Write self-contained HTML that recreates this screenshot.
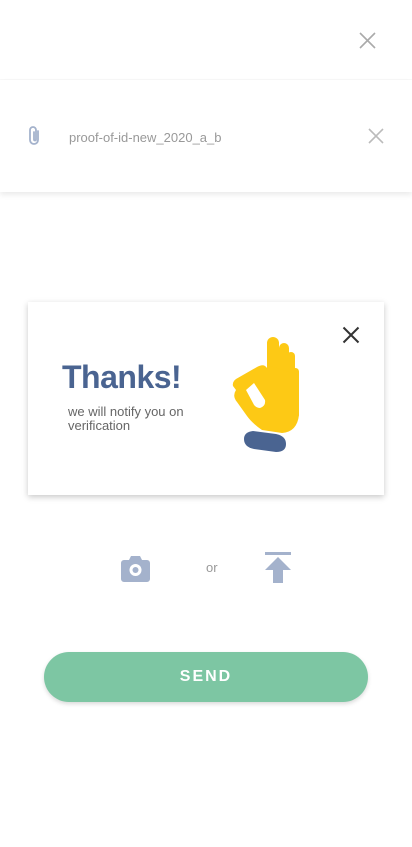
<!DOCTYPE html>
<html><head><meta charset="utf-8"><style>
*{margin:0;padding:0;box-sizing:border-box}
body{width:412px;height:847px;background:#fff;font-family:"Liberation Sans",sans-serif;position:relative;overflow:hidden}
.abs{position:absolute}
</style></head><body>
<svg class="abs" style="left:359px;top:32px" width="17" height="17" viewBox="0 0 17 17"><path d="M1 1L16 16M16 1L1 16" stroke="#aaa" stroke-width="1.6"/></svg>
<div class="abs" style="left:0;top:79px;width:412px;height:1px;background:#f8f8f8"></div>
<div class="abs" style="left:0;top:80px;width:412px;height:112px;background:#fff;box-shadow:0 3px 5px rgba(0,0,0,0.08)"></div>
<svg class="abs" style="left:27px;top:125px" width="14" height="22" viewBox="0 0 14 22"><path d="M11 6V15a4 4 0 0 1-8 0V5a3 3 0 0 1 6 0V14.5a1 1 0 0 1-2 0V7" fill="none" stroke="#a4b2cc" stroke-width="1.8" stroke-linecap="round"/></svg>
<div class="abs" style="left:69px;top:130px;font-size:13px;color:#999">proof-of-id-new_2020_a_b</div>
<svg class="abs" style="left:368px;top:128px" width="16" height="16" viewBox="0 0 16 16"><path d="M1 1L15 15M15 1L1 15" stroke="#bbb" stroke-width="1.6"/></svg>

<div class="abs" style="left:28px;top:302px;width:356px;height:193px;background:#fff;box-shadow:0 2px 6px rgba(0,0,0,0.22)"></div>
<svg class="abs" style="left:342px;top:326px" width="18" height="18" viewBox="0 0 18 18"><path d="M1.5 1.5L16.5 16.5M16.5 1.5L1.5 16.5" stroke="#333" stroke-width="2"/></svg>
<div class="abs" style="left:62px;top:359px;font-size:32px;font-weight:bold;color:#4a6491;letter-spacing:-0.5px">Thanks!</div>
<div class="abs" style="left:68px;top:405px;font-size:13px;line-height:14px;color:#666;width:150px">we will notify you on verification</div>
<svg class="abs" style="left:220px;top:330px" width="90" height="130" viewBox="0 0 90 130">
<rect x="47" y="7" width="12" height="70" rx="6" fill="#fdc915"/>
<rect x="59" y="13" width="10" height="65" rx="5" fill="#fdc915"/>
<rect x="67" y="22" width="8" height="60" rx="4" fill="#fdc915"/>
<rect x="72" y="38" width="7" height="50" rx="3.5" fill="#fdc915"/>
<path d="M47 35 L79 45 L79 85 Q77 102 62 103 L42 100 Q32 93 27 86 L17 72 Q12 66 16 60 L13 56 Q12 52 16 49 L37 37 Q44 33 47 38 Z" fill="#fdc915"/>
<path d="M26 60 L34 53 L45 70 Q46 76 40 78 Q35 78 33 73 Z" fill="#fff"/>
<path d="M33 101 Q24 102 24 109 Q24 117 34 119 L56 122 Q66 122 66 114 Q66 106 56 104 Z" fill="#4a6491"/>
</svg>

<svg class="abs" style="left:121px;top:555px" width="29" height="27" viewBox="0 0 29 27"><path d="M10 1h9l2 4h5a3 3 0 0 1 3 3v16a3 3 0 0 1-3 3H3a3 3 0 0 1-3-3V8a3 3 0 0 1 3-3h5z" fill="#a4b2cc"/><circle cx="14.5" cy="15" r="6" fill="#fff"/><circle cx="14.5" cy="15" r="3" fill="#a4b2cc"/></svg>
<div class="abs" style="left:206px;top:560px;font-size:13px;color:#999">or</div>
<svg class="abs" style="left:264px;top:552px" width="28" height="31" viewBox="0 0 28 31"><rect x="1" y="0" width="26" height="3" fill="#a4b2cc"/><path d="M14 5L27 18H19V31H9V18H1z" fill="#a4b2cc"/></svg>

<div class="abs" style="left:44px;top:652px;width:324px;height:50px;border-radius:25px;background:#7dc6a3;box-shadow:0 2px 4px rgba(0,0,0,0.15);color:#fff;font-size:16px;font-weight:bold;letter-spacing:2px;text-align:center;line-height:50px">SEND</div>
</body></html>
